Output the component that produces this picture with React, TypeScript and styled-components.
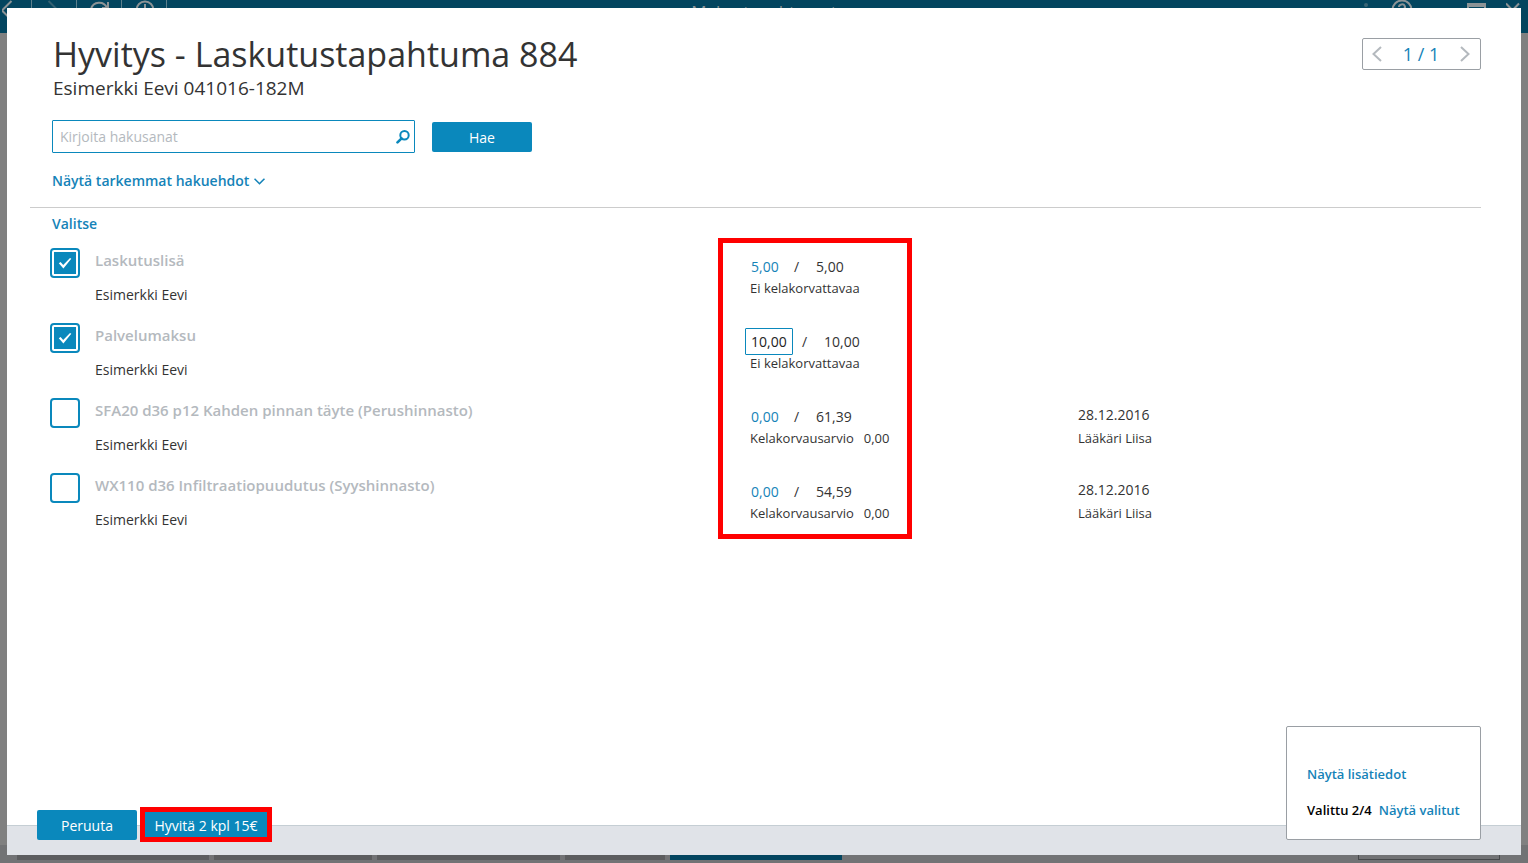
import React, { useState } from "react";
import styled, { createGlobalStyle } from "styled-components";

const blue = "#0a88bc";
const linkBlue = "#1583b8";
const ink = "#333333";
const muted = "#b4b9be";

const GlobalStyle = createGlobalStyle`
  *, *::before, *::after { box-sizing: border-box; }
  body {
    margin: 0;
    background: #808080;
    color: ${ink};
    font-family: "Open Sans", "Noto Sans", sans-serif;
    font-size: 14px;
    line-height: 20px;
  }
  button, input { font: inherit; }
`;

const Backdrop = styled.div`
  display: flex;
  flex-direction: column;
  justify-content: space-between;
  min-height: 100vh;
  overflow: hidden;
`;

const TopBar = styled.header`
  display: grid;
  grid-template-columns: 1fr auto 1fr;
  height: 33px;
  background: #03455f;
  color: #8c9396;
`;

const NavGroup = styled.div`
  display: flex;
`;

const NavCell = styled.span<{ $first?: boolean; $dim?: boolean }>`
  display: flex;
  align-items: flex-start;
  justify-content: center;
  width: ${(p) => (p.$first ? 32 : 45)}px;
  padding-right: ${(p) => (p.$first ? 14 : 0)}px;
  border-right: 1px solid #5d7f8c;

  svg { opacity: ${(p) => (p.$dim ? 0.35 : 1)}; flex: none; }
`;

const AppTitle = styled.span`
  font-size: 17px;
  line-height: 24px;
`;

const WindowGroup = styled.div`
  display: flex;
  justify-content: flex-end;
  gap: 20px;
  padding-right: 8px;
`;

const HelpGroup = styled.span`
  display: flex;
  gap: 23px;
  margin-right: 33px;
`;

const TabStrip = styled.footer`
  display: flex;
  gap: 5px;
  height: 18px;
  padding: 0 28px 3px 17px;
  background: #727375;
`;

const Tab = styled.span<{ $width: number; $active?: boolean }>`
  width: ${(p) => p.$width}px;
  background: ${(p) => (p.$active ? "#03455f" : "#5c5d5f")};
`;

const TabBox = styled.span`
  width: 142px;
  margin-left: auto;
  border: 1px solid #47494b;
`;

const Dialog = styled.main`
  position: fixed;
  inset: 8px 7px;
  display: flex;
  flex-direction: column;
  background: #fff;
`;

const DialogHeader = styled.div`
  display: flex;
  justify-content: space-between;
  align-items: flex-start;
  padding: 24px 40px 0 46px;
`;

const Title = styled.h1`
  margin: 0;
  font-size: 34px;
  line-height: 44px;
  font-weight: 400;
`;

const Subtitle = styled.p`
  margin: 0;
  font-size: 19px;
  line-height: 24px;
`;

const Pager = styled.nav`
  display: flex;
  align-items: center;
  justify-content: space-between;
  width: 119px;
  height: 32px;
  margin-top: 6px;
  padding: 0 10px 0 9px;
  border: 1px solid #9a9fa4;
  border-radius: 2px;
  color: ${linkBlue};
  font-size: 18px;
`;

const PagerButton = styled.button`
  display: flex;
  padding: 0;
  border: 0;
  background: none;
  color: ${muted};
`;

const SearchRow = styled.form`
  display: flex;
  align-items: center;
  gap: 17px;
  padding: 20px 0 0 45px;
`;

const SearchField = styled.label`
  display: flex;
  align-items: center;
  width: 363px;
  height: 33px;
  padding: 0 4px 0 7px;
  border: 1px solid ${blue};
  border-radius: 1px;
  color: ${blue};
`;

const SearchInput = styled.input`
  flex: 1;
  min-width: 0;
  padding: 0;
  border: 0;
  outline: 0;
  background: none;
  color: ${ink};

  &::placeholder { color: ${muted}; opacity: 1; }
`;

const Button = styled.button`
  width: 100px;
  height: 30px;
  padding: 2px 0 0;
  border: 0;
  border-radius: 2px;
  background: ${blue};
  color: #fff;
`;

const MarkedButton = styled(Button)`
  width: 132px;
  height: 35px;
  margin: 0 0 -2px 3px;
  border: 5px solid #ff0000;
  border-radius: 0;
`;

const MoreToggle = styled.button`
  display: flex;
  align-items: center;
  gap: 5px;
  align-self: flex-start;
  margin: 18px 0 16px 45px;
  padding: 0;
  border: 0;
  background: none;
  color: ${linkBlue};
  font-weight: 600;
`;

const Results = styled.section`
  flex: 1;
  min-height: 0;
  margin: 0 40px 0 23px;
  padding: 6px 0 0 20px;
  border-top: 1px solid #cccccc;
`;

const ResultsHeading = styled.h2`
  margin: 0 0 4px 2px;
  font-size: 14px;
  line-height: 20px;
  font-weight: 600;
  color: ${linkBlue};
`;

const Table = styled.table`
  width: 100%;
  table-layout: fixed;
  border-spacing: 0;
`;

const CheckCol = styled.col`
  width: 45px;
`;

const AmountCol = styled.col`
  width: 194px;
`;

const DateCol = styled.col`
  width: 569px;
`;

const Row = styled.tr`
  height: 75px;

  &:last-child { height: 76px; }
`;

const Cell = styled.td`
  padding: 0;
  vertical-align: top;
`;

const CheckCell = styled(Cell)`
  padding-top: 10px;
`;

const ItemCell = styled(Cell)`
  padding-top: 12px;
`;

const AmountCell = styled(Cell)`
  padding: 15px 0 0 22px;
  border: solid #ff0000;
  border-width: 0 5px;

  ${Row}:first-child & { border-top-width: 5px; padding-top: 10px; }
  ${Row}:last-child & { border-bottom-width: 5px; }
`;

const DateCell = styled(Cell)`
  padding: 17px 0 0 166px;
`;

const Checkbox = styled.input`
  appearance: none;
  display: block;
  width: 30px;
  height: 30px;
  margin: 0;
  border: 2px solid ${blue};
  border-radius: 4px;
  background: #fff;

  &:checked {
    padding: 2px;
    background-color: ${blue};
    background-clip: content-box;
  }
`;

const CheckHolder = styled.span`
  display: grid;
  width: 30px;
  place-items: center;

  > * { grid-area: 1 / 1; }
  svg { pointer-events: none; z-index: 1; }
`;

const ItemName = styled.label`
  display: block;
  color: ${muted};
  font-size: 15px;
  font-weight: 600;
`;

const ItemPerson = styled.span`
  display: block;
  margin-top: 15px;
`;

const AmountLine = styled.div`
  display: flex;
  align-items: center;
  height: 27px;
`;

const AmountInput = styled.input<{ $editing?: boolean }>`
  width: ${(p) => (p.$editing ? 48 : 40)}px;
  height: 27px;
  padding: 0 0 0 5px;
  border: 1px solid ${(p) => (p.$editing ? blue : "transparent")};
  border-radius: 1px;
  outline: 0;
  background: none;
  color: ${(p) => (p.$editing ? "#222222" : linkBlue)};
`;

const Slash = styled.span`
  width: 31px;
  padding-left: 9px;
`;

const Note = styled.div`
  display: flex;
  gap: 10px;
  padding-left: 5px;
  font-size: 13px;
  line-height: 16px;
`;

const DateText = styled.div`
  line-height: 20px;
`;

const Doctor = styled.div`
  margin-top: 4px;
  font-size: 13px;
  line-height: 18px;
`;

const DialogFooter = styled.footer`
  display: flex;
  align-items: flex-end;
  flex: none;
  height: 30px;
  padding: 0 40px 15px 30px;
  border-top: 1px solid #c5ced4;
  background: #e0e3e8;
`;

const Summary = styled.aside`
  width: 195px;
  height: 114px;
  margin-left: auto;
  padding: 37px 0 0 20px;
  border: 1px solid #9a9fa4;
  border-radius: 2px;
  background: #fff;
  color: #000;
  font-size: 13px;
  font-weight: 600;
  white-space: nowrap;
`;

const SummaryLine = styled.p`
  display: flex;
  gap: 7px;
  margin: 0 0 16px;
`;

const Link = styled.a`
  color: ${linkBlue};
  text-decoration: none;
`;

const rows = [
  { name: "Laskutuslisä", refund: "5,00", total: "5,00", note: "Ei kelakorvattavaa", selected: true },
  { name: "Palvelumaksu", refund: "10,00", total: "10,00", note: "Ei kelakorvattavaa", selected: true, editing: true },
  { name: "SFA20 d36 p12 Kahden pinnan täyte (Perushinnasto)", refund: "0,00", total: "61,39", note: "Kelakorvausarvio", estimate: "0,00", date: "28.12.2016", doctor: "Lääkäri Liisa" },
  { name: "WX110 d36 Infiltraatiopuudutus (Syyshinnasto)", refund: "0,00", total: "54,59", note: "Kelakorvausarvio", estimate: "0,00", date: "28.12.2016", doctor: "Lääkäri Liisa" },
];

const tabs = [{ width: 192 }, { width: 158 }, { width: 183 }, { width: 100 }, { width: 172, active: true }];

const Chevron = ({ flip }: { flip?: boolean }) => (
  <svg width="10" height="16" viewBox="0 0 10 16" fill="none" stroke="currentColor" strokeWidth="2">
    <path d={flip ? "M1 1l7.5 7L1 15" : "M9 1L1.5 8 9 15"} />
  </svg>
);

function ResultRow({ row, index }: { row: (typeof rows)[number]; index: number }) {
  const [checked, setChecked] = useState(Boolean(row.selected));
  const id = `item-${index}`;
  return (
    <Row>
      <CheckCell>
        <CheckHolder>
          <Checkbox id={id} type="checkbox" checked={checked} onChange={() => setChecked(!checked)} />
          {checked && (
            <svg width="14" height="12" viewBox="0 0 14 12" fill="#fff">
              <path d="M.8 6.200 2.600 5l2.600 3L12 1l1.300.800L5.400 11.400z" />
            </svg>
          )}
        </CheckHolder>
      </CheckCell>
      <ItemCell>
        <ItemName htmlFor={id}>{row.name}</ItemName>
        <ItemPerson>Esimerkki Eevi</ItemPerson>
      </ItemCell>
      <AmountCell>
        <AmountLine>
          <AmountInput aria-label={`Hyvitys, ${row.name}`} defaultValue={row.refund} $editing={row.editing} />
          <Slash>/</Slash>
          <span>{row.total}</span>
        </AmountLine>
        <Note>
          <span>{row.note}</span>
          {row.estimate && <span>{row.estimate}</span>}
        </Note>
      </AmountCell>
      <DateCell>
        {row.date && <DateText>{row.date}</DateText>}
        {row.doctor && <Doctor>{row.doctor}</Doctor>}
      </DateCell>
    </Row>
  );
}

export default function App() {
  return (
    <>
      <GlobalStyle />
      <Backdrop aria-hidden="true">
        <TopBar>
          <NavGroup>
            <NavCell $first>
              <svg width="14" height="22" viewBox="0 0 14 22" fill="none" stroke="currentColor" strokeWidth="2">
                <path d="M9.500 1 0 10.500l9.500 9.500" />
              </svg>
            </NavCell>
            <NavCell $dim>
              <svg width="14" height="22" viewBox="0 0 14 22" fill="none" stroke="currentColor" strokeWidth="2">
                <path d="M1.500 1 11 10.500 1.500 20" />
              </svg>
            </NavCell>
            <NavCell>
              <svg width="22" height="22" viewBox="0 0 22 22" fill="none" stroke="currentColor" strokeWidth="2">
                <path d="M3 9a8.500 8.500 0 0 1 16-1M20 2v6h-6" />
              </svg>
            </NavCell>
            <NavCell>
              <svg width="22" height="22" viewBox="0 0 22 22" fill="none" stroke="currentColor" strokeWidth="2">
                <circle cx="12" cy="10" r="8.500" />
                <path d="M12 4v7h5" />
              </svg>
            </NavCell>
          </NavGroup>
          <AppTitle>Maksutapahtumat</AppTitle>
          <WindowGroup>
            <HelpGroup>
              <svg width="4" height="22" viewBox="0 0 4 22" fill="currentColor" opacity=".4">
                <circle cx="2" cy="5" r="2" />
              </svg>
              <svg width="22" height="22" viewBox="0 0 22 22" fill="none" stroke="currentColor" strokeWidth="2">
                <circle cx="11" cy="10" r="9.500" />
                <path d="M8 7a3 2.600 0 1 1 4.500 2.200Q11 10.500 11 12" />
              </svg>
            </HelpGroup>
            <svg width="20" height="22" viewBox="0 0 20 22" fill="none" stroke="currentColor" strokeWidth="2">
              <path d="M1 5h19" strokeWidth="4" />
              <path d="M2 5v14h17V5" />
            </svg>
            <svg width="14" height="22" viewBox="0 0 14 22" fill="none" stroke="currentColor" strokeWidth="2">
              <path d="M0 3.500 13 17M13 3.500 0 17" />
            </svg>
          </WindowGroup>
        </TopBar>
        <TabStrip>
          {tabs.map((t, i) => (
            <Tab key={i} $width={t.width} $active={t.active} />
          ))}
          <TabBox />
        </TabStrip>
      </Backdrop>

      <Dialog>
        <DialogHeader>
          <div>
            <Title>Hyvitys - Laskutustapahtuma 884</Title>
            <Subtitle>Esimerkki Eevi 041016-182M</Subtitle>
          </div>
          <Pager aria-label="Sivut">
            <PagerButton type="button" aria-label="Edellinen"><Chevron /></PagerButton>
            <span>1 / 1</span>
            <PagerButton type="button" aria-label="Seuraava"><Chevron flip /></PagerButton>
          </Pager>
        </DialogHeader>

        <SearchRow onSubmit={(e) => e.preventDefault()}>
          <SearchField>
            <SearchInput type="text" placeholder="Kirjoita hakusanat" aria-label="Hakusanat" />
            <svg width="14" height="14" viewBox="0 0 14 14" fill="none" stroke="currentColor">
              <circle cx="8.500" cy="5.300" r="4.200" strokeWidth="2" />
              <path d="M5.600 8.300 1.500 12.400" strokeWidth="2.600" strokeLinecap="round" />
            </svg>
          </SearchField>
          <Button type="submit">Hae</Button>
        </SearchRow>

        <MoreToggle type="button">
          Näytä tarkemmat hakuehdot
          <svg width="11" height="7" viewBox="0 0 11 7" fill="none" stroke="currentColor" strokeWidth="1.600">
            <path d="m.5.700 5 5 5-5" />
          </svg>
        </MoreToggle>

        <Results>
          <ResultsHeading>Valitse</ResultsHeading>
          <Table>
            <colgroup>
              <CheckCol />
              <col />
              <AmountCol />
              <DateCol />
            </colgroup>
            <tbody>
              {rows.map((row, i) => (
                <ResultRow key={row.name} row={row} index={i} />
              ))}
            </tbody>
          </Table>
        </Results>

        <DialogFooter>
          <Button type="button">Peruuta</Button>
          <MarkedButton type="button">Hyvitä 2 kpl 15€</MarkedButton>
          <Summary>
            <SummaryLine><Link href="#lisatiedot">Näytä lisätiedot</Link></SummaryLine>
            <SummaryLine><span>Valittu 2/4</span><Link href="#valitut">Näytä valitut</Link></SummaryLine>
          </Summary>
        </DialogFooter>
      </Dialog>
    </>
  );
}
